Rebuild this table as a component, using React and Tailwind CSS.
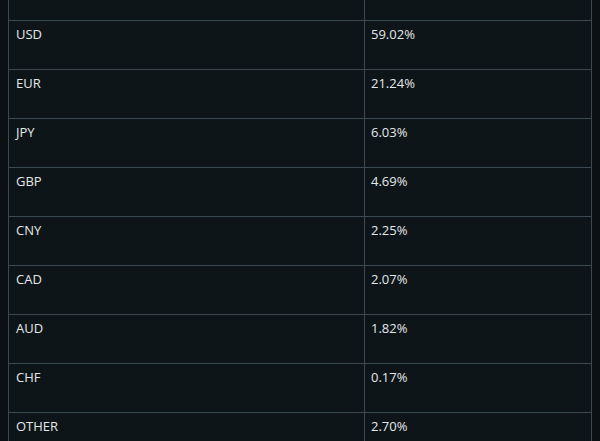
import React from "react";

const rows = [
  ["USD", "59.02%"],
  ["EUR", "21.24%"],
  ["JPY", "6.03%"],
  ["GBP", "4.69%"],
  ["CNY", "2.25%"],
  ["CAD", "2.07%"],
  ["AUD", "1.82%"],
  ["CHF", "0.17%"],
  ["OTHER", "2.70%"],
];

export default function App() {
  return (
    <div
      className="w-[600px] h-[441px] overflow-hidden bg-[#0a1013] px-[8px]"
      style={{ fontFamily: '"Open Sans", "Noto Sans", sans-serif' }}
    >
      <div className="border-x border-[#3a4a50] bg-[#0d1518] text-[13px] text-[#e4e8ea]">
        <div className="flex h-[20px]">
          <div className="w-[356px] border-r border-[#3a4a50]" />
          <div className="flex-1" />
        </div>
        {rows.map(([c, p]) => (
          <div key={c} className="flex h-[49px] border-t border-[#3a4a50]">
            <div className="w-[356px] border-r border-[#3a4a50] pl-[7px] pt-[4px] leading-[18px]">
              {c}
            </div>
            <div className="flex-1 pl-[6px] pt-[4px] leading-[18px]">{p}</div>
          </div>
        ))}
      </div>
    </div>
  );
}
